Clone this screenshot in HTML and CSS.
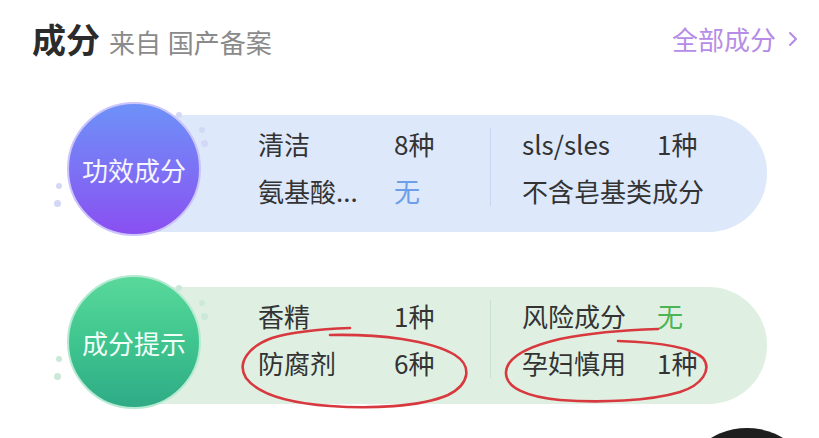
FILE: index.html
```html
<!DOCTYPE html>
<html lang="zh-CN">
<head>
<meta charset="utf-8">
<link rel="stylesheet" href="styles.css">
</head>
<body>
<div class="page">
  <header class="header">
    <div class="title">
      <span class="title-main">成分</span>
      <span class="title-sub">来自 国产备案</span>
    </div>
    <div class="more">
      <span>全部成分</span>
      <svg class="chev" width="10" height="16" viewBox="0 0 10 16"><polyline points="2,2 8,8 2,14" fill="none" stroke="#b48be6" stroke-width="2" stroke-linecap="round" stroke-linejoin="round"/></svg>
    </div>
  </header>

  <section class="card card-blue">
    <div class="badge">
      <span class="dot d1"></span><span class="dot d2"></span><span class="dot d3"></span><span class="dot d4"></span><span class="dot d5"></span>
      <div class="circle">功效成分</div>
    </div>
    <div class="band">
      <div class="col col-a">
        <span class="lbl">清洁</span><span class="val">8种</span>
        <span class="lbl">氨基酸...</span><span class="val blue">无</span>
      </div>
      <div class="divider"></div>
      <div class="col col-b">
        <span class="lbl">sls/sles</span><span class="val">1种</span>
        <span class="lbl wide">不含皂基类成分</span>
      </div>
    </div>
  </section>

  <section class="card card-green">
    <div class="badge">
      <span class="dot d1"></span><span class="dot d2"></span><span class="dot d3"></span><span class="dot d4"></span><span class="dot d5"></span>
      <div class="circle">成分提示</div>
    </div>
    <div class="band">
      <div class="col col-a">
        <span class="lbl">香精</span><span class="val">1种</span>
        <span class="lbl">防腐剂</span><span class="val">6种</span>
      </div>
      <div class="divider"></div>
      <div class="col col-b">
        <span class="lbl">风险成分</span><span class="val green">无</span>
        <span class="lbl">孕妇慎用</span><span class="val">1种</span>
      </div>
    </div>
  </section>

  <svg class="marks" width="819" height="438" viewBox="0 0 819 438">
    <path d="M330,335 C380,334 430,340 455,355 C472,366 470,384 448,395 C420,407 370,409 330,406 C290,403 258,394 246,378 C236,362 250,346 272,338 C295,331 322,329 350,328" fill="none" stroke="#d8393f" stroke-width="2.6" stroke-linecap="round"/>
    <path d="M618,341 C650,342 690,346 703,358 C712,370 702,385 680,392 C650,401 600,403 560,400 C528,397 505,388 506,372 C507,356 530,346 560,339 C590,333 625,330 658,329" fill="none" stroke="#d8393f" stroke-width="2.6" stroke-linecap="round"/>
  </svg>
  <div class="blob"></div>
</div>
</body>
</html>
```

FILE: styles.css
```css
* { box-sizing: border-box; }
html, body { margin: 0; padding: 0; background: #fff; }
body {
  font-family: "Noto Sans CJK SC", "Noto Sans", sans-serif;
  color: #333;
  width: 819px;
  height: 438px;
  overflow: hidden;
}
.page { position: relative; width: 819px; height: 438px; overflow: hidden; }

.header {
  height: 78px;
  display: flex;
  align-items: center;
  justify-content: space-between;
  padding: 0 21px 0 32px;
}
.title { display: flex; align-items: baseline; }
.title-main { font-size: 34px; font-weight: 700; color: #2b2b2b; line-height: 1; }
.title-sub { font-size: 26px; color: #8a8a8a; margin-left: 9px; line-height: 1; word-spacing: 1px; }
.more { display: flex; align-items: center; color: #b68ce7; font-size: 26px; line-height: 1; }
.chev { margin-left: 12px; }

.card {
  display: flex;
  align-items: center;
  margin-left: 67px;
  height: 134px;
}
.card-blue { margin-top: 24px; }
.card-green { margin-top: 39px; }

.badge { position: relative; width: 134px; height: 134px; flex: none; z-index: 1; }
.circle {
  width: 134px; height: 134px;
  border-radius: 50%;
  display: flex; align-items: center; justify-content: center;
  color: #f6f4ff;
  font-size: 26px;
  letter-spacing: 0;
}
.card-blue .circle {
  background: linear-gradient(180deg, #6d91f8 0%, #7c72f5 50%, #8a4ff1 100%);
  border: 2px solid #cbc5fb;
}
.card-green .circle {
  background: linear-gradient(180deg, #59d89a 0%, #3fc58f 50%, #2fab86 100%);
  border: 2px solid #b6ead2;
  color: #f2fff8;
}

.dot { position: absolute; border-radius: 50%; }
.card-blue .dot { background: #d3d8f6; }
.card-green .dot { background: #cbe8d8; }
.d1 { width: 6px; height: 6px; left: 109px; top: 10px; }
.d2 { width: 6px; height: 6px; left: 132px; top: 25px; }
.d3 { width: 7px; height: 7px; left: 134px; top: 38px; }
.d4 { width: 6px; height: 6px; left: -11px; top: 81px; }
.d5 { width: 7px; height: 7px; left: -13px; top: 98px; }

.band {
  margin-left: -67px;
  margin-top: 8px;
  width: 633px;
  height: 117px;
  border-radius: 0 58px 58px 0;
  display: flex;
  align-items: center;
  padding: 0 0 13px 124px;
}
.card-blue .band { background: #dde8fb; }
.card-green .band { background: #dff0e3; margin-top: 6px; padding-bottom: 12px; }

.col {
  display: grid;
  grid-template-columns: 136px auto;
  grid-auto-rows: 47px;
  align-items: center;
  font-size: 26px;
  line-height: 47px;
}
.col-a { width: 232px; }
.col-b { margin-left: 31px; grid-template-columns: 135px auto; }
.lbl { color: #333; white-space: nowrap; }
.lbl.wide { grid-column: 1 / span 2; }
.val { color: #333; }
.val.blue { color: #6c9fe8; }
.val.green { color: #4cb455; }

.divider { width: 1px; height: 78px; flex: none; }
.card-blue .divider { background: #c8d7f1; }
.card-green .divider { background: #c8e2cf; }

.marks { position: absolute; left: 0; top: 0; pointer-events: none; z-index: 2; }
.blob {
  position: absolute;
  left: 677px; top: 428px;
  width: 140px; height: 140px;
  border-radius: 50%;
  background: #1e1e1e;
}
```
